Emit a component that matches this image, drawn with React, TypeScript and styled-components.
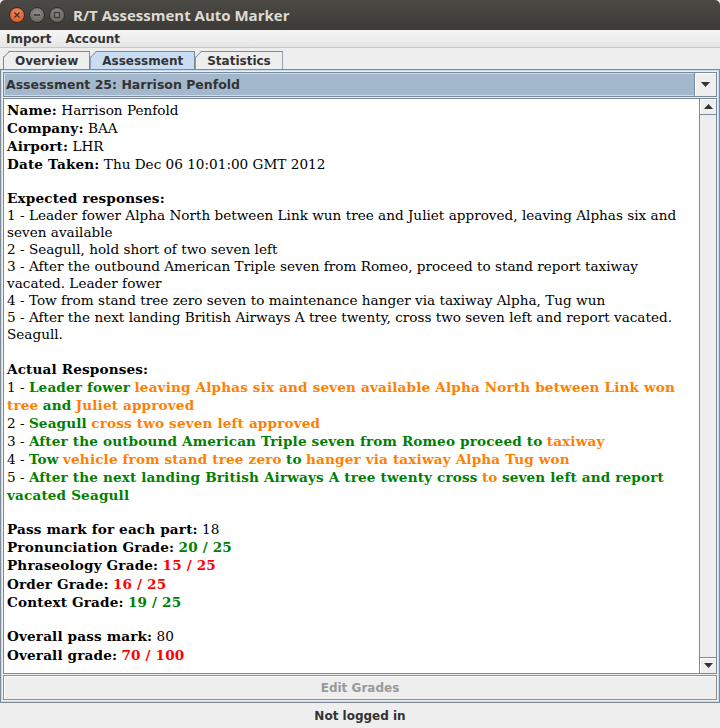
import styled, { createGlobalStyle } from 'styled-components';

const GlobalStyle = createGlobalStyle`
    html, body {
        margin: 0;
        padding: 0;
        background: #eeeeee;
    }
`

const SWindow = styled.div`
    width: 720px;
    height: 728px;
    display: flex;
    flex-direction: column;
    background: #eeeeee;
    font-family: 'DejaVu Sans', sans-serif;
    overflow: hidden;
`

const STitleBar = styled.div`
    height: 30px;
    flex: none;
    display: flex;
    align-items: center;
    padding-left: 9px;
    gap: 4px;
    background: linear-gradient(#4a4944, #3c3b37);
    border-radius: 5px 5px 0 0;
`

const SWinButton = styled.span<{ $close?: boolean }>`
    width: 16px;
    height: 16px;
    border-radius: 50%;
    display: flex;
    align-items: center;
    justify-content: center;
    background: ${p => p.$close ? 'radial-gradient(circle at 50% 35%, #f58a5e, #df4a16)' : 'radial-gradient(circle at 50% 35%, #8e8c86, #5e5c57)'};
    border: 1px solid #2f2e2b;
    box-sizing: border-box;
`

const STitle = styled.span`
    margin-left: 4px;
    font-family: 'Open Sans', sans-serif;
    font-weight: 700;
    font-size: 15px;
    color: #dfdbd2;
`

const SMenuBar = styled.div`
    height: 17px;
    flex: none;
    display: flex;
    align-items: center;
    gap: 14px;
    padding-left: 6px;
    background: linear-gradient(#f6f6f6, #e6e6e6);
    border-bottom: 1px solid #c8c8c8;
    font-size: 12px;
    font-weight: bold;
    color: #333333;
`

const STabStrip = styled.div`
    height: 21px;
    flex: none;
    display: flex;
    align-items: flex-end;
    padding-left: 3px;
`

const STab = styled.div<{ $active?: boolean }>`
    height: 18px;
    box-sizing: border-box;
    padding: 1px 11px 0 11px;
    display: flex;
    align-items: center;
    font-size: 12px;
    font-weight: bold;
    color: #333333;
    background: ${p => p.$active ? '#c8ddf2' : '#eeeeee'};
    border: 1px solid #7a8a99;
    border-bottom: none;
    clip-path: polygon(6px 0, 100% 0, 100% 100%, 0 100%, 0 6px);
    position: relative;

    &::before {
        content: '';
        position: absolute;
        left: -1px;
        top: 5px;
        width: 9px;
        height: 1px;
        background: #7a8a99;
        transform: rotate(-45deg);
        transform-origin: 0 0;
    }
`

const SPanel = styled.div`
    height: 634px;
    flex: none;
    box-sizing: border-box;
    display: flex;
    flex-direction: column;
    gap: 1px;
    border: 1px solid #7a8a99;
    box-shadow: inset 0 0 0 1px #c8ddf2;
    padding: 2px;
`

const SCombo = styled.div`
    height: 25px;
    flex: none;
    display: flex;
    box-sizing: border-box;
    border: 1px solid #7a8a99;
    background: #a3b8cc;
    box-shadow: inset 0 0 0 1px #c8ddf2;
`

const SComboText = styled.div`
    flex: 1;
    display: flex;
    align-items: center;
    padding-left: 2px;
    font-size: 12.5px;
    font-weight: bold;
    color: #333333;
`

const SComboArrow = styled.div`
    width: 21px;
    display: flex;
    align-items: center;
    justify-content: center;
    background: #eeeeee;
    border-left: 1px solid #7a8a99;
    box-shadow: inset 1px 1px 0 #ffffff;
`

const STextArea = styled.div`
    flex: 1;
    display: flex;
    border: 1px solid #7a8a99;
    background: #ffffff;
    min-height: 0;
`

const SDoc = styled.div`
    flex: 1;
    padding: 2px 4px 0 3px;
    font-family: 'DejaVu Serif', serif;
    font-size: 13.6px;
    color: #000000;
    overflow: hidden;

    & b {
        letter-spacing: 0.15px;
    }
`

const SBlock = styled.div<{ $lh: number; $gap: number }>`
    line-height: ${p => p.$lh}px;
    margin-bottom: ${p => p.$gap}px;
`

const SScrollbar = styled.div`
    width: 16px;
    display: flex;
    flex-direction: column;
    background: #eeeeee;
    border-left: 1px solid #7a8a99;
`

const SScrollButton = styled.div<{ $down?: boolean }>`
    height: 16px;
    box-sizing: border-box;
    display: flex;
    align-items: center;
    justify-content: center;
    background: #eeeeee;
    border-bottom: ${p => p.$down ? 'none' : '1px solid #7a8a99'};
    border-top: ${p => p.$down ? '1px solid #7a8a99' : 'none'};
    box-shadow: inset 1px 1px 0 #ffffff;
`

const STrack = styled.div`
    flex: 1;
    background: #eeeeee;
`

const SButton = styled.div`
    height: 25px;
    flex: none;
    box-sizing: border-box;
    display: flex;
    align-items: center;
    justify-content: center;
    border: 1px solid #8e8f8f;
    box-shadow: inset 1px 1px 0 #ffffff;
    background: #eeeeee;
    font-size: 12px;
    font-weight: bold;
    color: #999999;
`

const SStatus = styled.div`
    flex: 1;
    display: flex;
    align-items: center;
    justify-content: center;
    font-size: 12px;
    font-weight: bold;
    color: #333333;
`

const Ok = styled.b`
    color: #008000;
`
const Warn = styled.b`
    color: #ff8000;
`
const Bad = styled.b`
    color: #ff0000;
`

function Arrow({ down }: { down?: boolean }) {
    return (
        <svg width="9" height="5" viewBox="0 0 9 5">
            <polygon points={down ? '0,0 9,0 4.5,5' : '0,5 9,5 4.5,0'} fill="#333333" />
        </svg>
    )
}

export default function App() {
    return (
        <SWindow>
            <GlobalStyle />
            <STitleBar>
                <SWinButton $close>
                    <svg width="8" height="8" viewBox="0 0 8 8">
                        <path d="M1.5 1.5 L6.5 6.5 M6.5 1.5 L1.5 6.5" stroke="#3c3b37" strokeWidth="1.6" />
                    </svg>
                </SWinButton>
                <SWinButton>
                    <svg width="8" height="8" viewBox="0 0 8 8">
                        <path d="M1 4 L7 4" stroke="#3c3b37" strokeWidth="1.6" />
                    </svg>
                </SWinButton>
                <SWinButton>
                    <svg width="8" height="8" viewBox="0 0 8 8">
                        <rect x="1.5" y="1.5" width="5" height="5" fill="none" stroke="#3c3b37" strokeWidth="1.3" />
                    </svg>
                </SWinButton>
                <STitle>R/T Assessment Auto Marker</STitle>
            </STitleBar>
            <SMenuBar>
                <span>Import</span>
                <span>Account</span>
            </SMenuBar>
            <STabStrip>
                <STab>Overview</STab>
                <STab $active>Assessment</STab>
                <STab>Statistics</STab>
            </STabStrip>
            <SPanel>
                <SCombo>
                    <SComboText>Assessment 25: Harrison Penfold</SComboText>
                    <SComboArrow><Arrow down /></SComboArrow>
                </SCombo>
                <STextArea>
                    <SDoc>
                        <SBlock $lh={18} $gap={16.5}>
                            <b>Name:</b> Harrison Penfold<br />
                            <b>Company:</b> BAA<br />
                            <b>Airport:</b> LHR<br />
                            <b>Date Taken:</b> Thu Dec 06 10:01:00 GMT 2012
                        </SBlock>
                        <SBlock $lh={17.1} $gap={16.7}>
                            <b>Expected responses:</b><br />
                            1 - Leader fower Alpha North between Link wun tree and Juliet approved, leaving Alphas six and seven available<br />
                            2 - Seagull, hold short of two seven left<br />
                            3 - After the outbound American Triple seven from Romeo, proceed to stand report taxiway vacated. Leader fower<br />
                            4 - Tow from stand tree zero seven to maintenance hanger via taxiway Alpha, Tug wun<br />
                            5 - After the next landing British Airways A tree twenty, cross two seven left and report vacated. Seagull.
                        </SBlock>
                        <SBlock $lh={18} $gap={15.9}>
                            <b>Actual Responses:</b><br />
                            1 - <Ok>Leader fower</Ok> <Warn>leaving Alphas six and seven available Alpha North between Link won tree</Warn> <Ok>and</Ok> <Warn>Juliet approved</Warn><br />
                            2 - <Ok>Seagull</Ok> <Warn>cross two seven left approved</Warn><br />
                            3 - <Ok>After the outbound American Triple seven from Romeo proceed to</Ok> <Warn>taxiway</Warn><br />
                            4 - <Ok>Tow</Ok> <Warn>vehicle from stand tree zero</Warn> <Ok>to</Ok> <Warn>hanger via taxiway Alpha Tug won</Warn><br />
                            5 - <Ok>After the next landing British Airways A tree twenty cross</Ok> <Warn>to</Warn> <Ok>seven left and report vacated Seagull</Ok>
                        </SBlock>
                        <SBlock $lh={18.25} $gap={15.4}>
                            <b>Pass mark for each part:</b> 18<br />
                            <b>Pronunciation Grade:</b> <Ok>20 / 25</Ok><br />
                            <b>Phraseology Grade:</b> <Bad>15 / 25</Bad><br />
                            <b>Order Grade:</b> <Bad>16 / 25</Bad><br />
                            <b>Context Grade:</b> <Ok>19 / 25</Ok>
                        </SBlock>
                        <SBlock $lh={19} $gap={0}>
                            <b>Overall pass mark:</b> 80<br />
                            <b>Overall grade:</b> <Bad>70 / 100</Bad>
                        </SBlock>
                    </SDoc>
                    <SScrollbar>
                        <SScrollButton><Arrow /></SScrollButton>
                        <STrack />
                        <SScrollButton $down><Arrow down /></SScrollButton>
                    </SScrollbar>
                </STextArea>
                <SButton>Edit Grades</SButton>
            </SPanel>
            <SStatus>Not logged in</SStatus>
        </SWindow>
    )
}
